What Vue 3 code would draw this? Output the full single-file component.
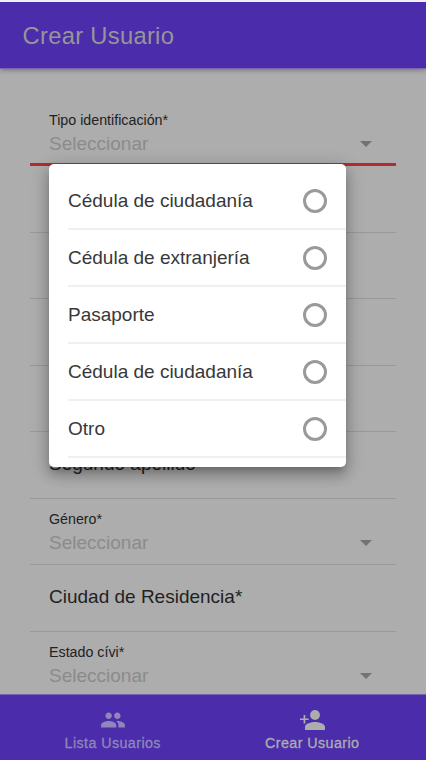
<script setup>
const fields = [
  { label: 'Tipo identificación*', select: true, invalid: true },
  { label: '' },
  { label: '' },
  { label: '' },
  { label: '' },
  { label: 'Segundo apellido' },
  { label: 'Género*', select: true },
  { label: 'Ciudad de Residencia*' },
  { label: 'Estado cívi*', select: true },
]
const options = ['Cédula de ciudadanía', 'Cédula de extranjería', 'Pasaporte', 'Cédula de ciudadanía', 'Otro']
</script>

<template>
  <div class="page">
    <header class="toolbar">Crear Usuario</header>
    <main class="content">
      <div v-for="(f, i) in fields" :key="i" class="field" :class="{ invalid: f.invalid }">
        <template v-if="f.select">
          <div class="stacked">
            <div class="small">{{ f.label }}</div>
            <div class="placeholder">Seleccionar</div>
          </div>
          <span class="arrow"></span>
        </template>
        <div v-else class="plain">{{ f.label }}</div>
      </div>
    </main>
    <nav class="tabs">
      <div class="tab">
        <div class="icon-box">
          <svg width="26" height="26" viewBox="0 0 24 24"><path d="M16 11c1.66 0 2.99-1.34 2.99-3S17.66 5 16 5s-3 1.34-3 3 1.34 3 3 3zm-8 0c1.66 0 2.99-1.34 2.99-3S9.66 5 8 5 5 6.34 5 8s1.34 3 3 3zm0 2c-2.33 0-7 1.17-7 3.5V19h14v-2.5C15 14.17 10.33 13 8 13zm8 0c-.29 0-.62.02-.97.05 1.16.84 1.97 1.97 1.97 3.45V19h6v-2.5c0-2.33-4.67-3.5-7-3.5z" /></svg>
        </div>
        <span>Lista Usuarios</span>
      </div>
      <div class="tab active">
        <div class="icon-box">
          <svg width="25" height="20" viewBox="0 0 25 20"><circle cx="15" cy="5" r="4.9" /><path d="M15 12c-3.5 0-10 1.500-10 4.900V20h20v-3.100c0-3.400-6.500-4.900-10-4.900zM3.600 5h1.700v3.400h3.300v1.700H5.300v3.400H3.600v-3.400H0V8.400h3.600z" /></svg>
        </div>
        <span>Crear Usuario</span>
      </div>
    </nav>
    <div class="popover">
      <div v-for="(o, i) in options" :key="i" class="option">
        <span>{{ o }}</span>
        <span class="radio"></span>
      </div>
    </div>
  </div>
</template>

<style>
body { background: #adadad; }
</style>

<style scoped>
.page {
  position: relative;
  box-sizing: border-box;
  height: 760px;
  overflow: hidden;
  display: flex;
  flex-direction: column;
  border-top: 2px solid #f1f0f6;
  background: #adadad;
  font-family: "Liberation Sans", Arial, sans-serif;
  color: #222;
}
.toolbar {
  z-index: 1;
  box-sizing: border-box;
  height: 67px;
  flex: none;
  padding-left: 22.5px;
  border-bottom: 1px solid #7566ad;
  background: #4b2dab;
  color: #969696;
  font-size: 23.75px;
  line-height: 67px;
  letter-spacing: 0.0125em;
  box-shadow: 0 1px 5px rgba(0, 0, 0, 0.35);
}
.content {
  flex: 1;
  min-height: 0;
  overflow: hidden;
  padding: 30.5px 30px 0;
}
.field {
  box-sizing: border-box;
  height: 66.5px;
  display: flex;
  justify-content: space-between;
  border-bottom: 1px solid #999;
  padding: 0 24px 0 19px;
}
.field.invalid { border-bottom: 3px solid #b52b2e; }
.small {
  margin-top: 12px;
  font-size: 14.25px;
  line-height: 17px;
}
.placeholder {
  margin-top: 4px;
  font-size: 19px;
  line-height: 22px;
  color: #8b8b8b;
}
.arrow {
  width: 0;
  height: 0;
  margin-top: 41px;
  border: 6px solid transparent;
  border-top-color: #737373;
  border-bottom: 0;
}
.plain {
  font-size: 19px;
  line-height: 63px;
}
.tabs {
  box-sizing: border-box;
  height: 66px;
  flex: none;
  display: grid;
  grid-template-columns: 1fr 1fr;
  padding: 0 14px 0 13px;
  border-top: 1px solid #7566ad;
  background: #4b2dab;
}
.tab {
  display: flex;
  flex-direction: column;
  align-items: center;
  padding-top: 12px;
  color: #9186ba;
  font-size: 14.25px;
  line-height: 17px;
  letter-spacing: 0.03em;
  -webkit-text-stroke: 0.3px currentColor;
}
.tab.active { color: #adadad; }
.icon-box {
  display: flex;
  align-items: center;
  height: 26px;
  margin-bottom: 2px;
}
.icon-box svg {
  fill: currentColor;
  stroke: none;
}
.popover {
  position: absolute;
  z-index: 2;
  left: 49px;
  top: 162px;
  box-sizing: border-box;
  width: 297px;
  height: 303px;
  padding-top: 9px;
  border-radius: 5px;
  overflow: hidden;
  background: #fff;
  box-shadow: 0 6px 6px -4px rgba(0, 0, 0, 0.2), 0 9px 12px 1px rgba(0, 0, 0, 0.14), 0 4px 17px 2px rgba(0, 0, 0, 0.2);
}
.option {
  box-sizing: border-box;
  height: 57px;
  margin-left: 19px;
  padding-right: 19px;
  display: flex;
  align-items: center;
  justify-content: space-between;
  border-bottom: 2px solid #f0f0f0;
  color: #383838;
  font-size: 19px;
}
.radio {
  box-sizing: border-box;
  width: 24px;
  height: 24px;
  border: 3px solid #9a9a9a;
  border-radius: 50%;
}
</style>
